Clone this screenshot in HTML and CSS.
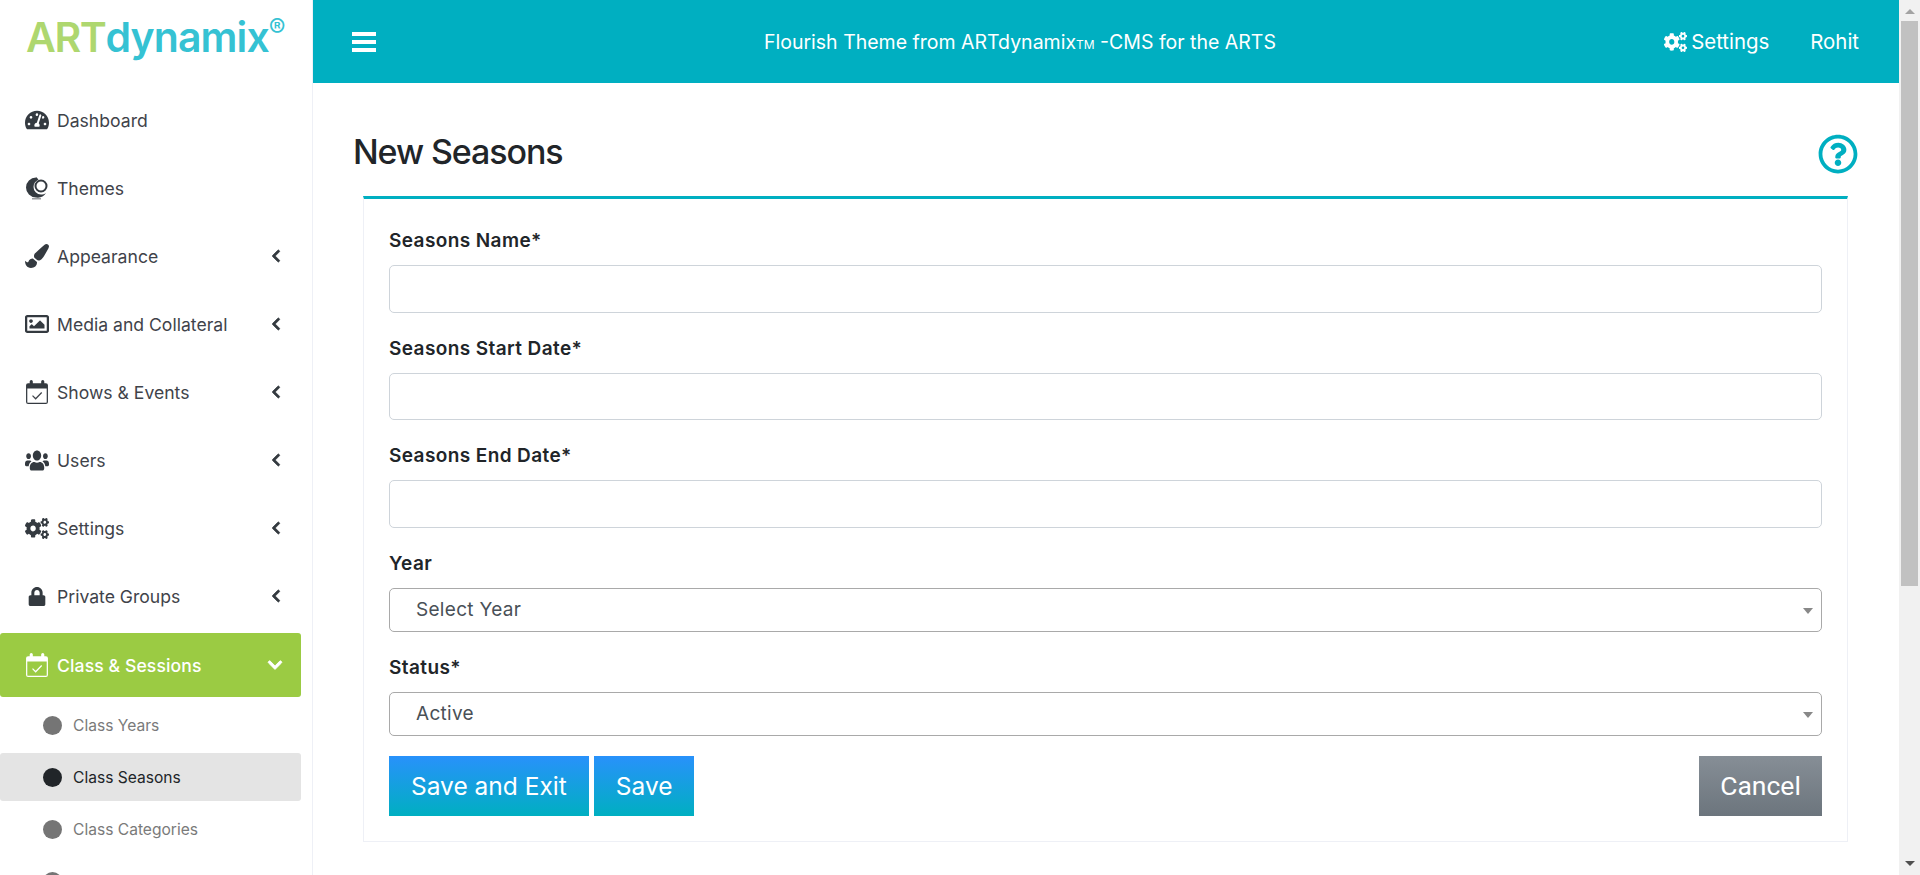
FILE: index.html
```html
<!DOCTYPE html>
<html lang="en">
<head>
  <meta charset="UTF-8">
  <meta name="viewport" content="width=device-width, initial-scale=1.0">
  <title>New Seasons</title>
  <link rel="stylesheet" href="styles.css">
</head>
<body>
  <svg class="icon-defs" width="0" height="0">
    <symbol id="i-dash" viewBox="0 0 576 512"><path d="M288 32C128.94 32 0 160.94 0 320c0 52.8 14.25 102.26 39.06 144.8 5.61 9.62 16.3 15.2 27.44 15.2h443c11.14 0 21.83-5.58 27.44-15.2C561.75 422.26 576 372.8 576 320c0-159.06-128.94-288-288-288zm0 64c14.71 0 26.58 10.13 30.32 23.65-1.11 2.26-2.64 4.23-3.45 6.67l-9.22 27.67c-5.13 3.49-10.97 6.01-17.64 6.01-17.67 0-32-14.33-32-32S270.33 96 288 96zM96 384c-17.67 0-32-14.33-32-32s14.33-32 32-32 32 14.33 32 32-14.33 32-32 32zm48-160c-17.67 0-32-14.33-32-32s14.33-32 32-32 32 14.33 32 32-14.33 32-32 32zm246.77-72.41l-61.33 184C343.13 347.33 352 364.54 352 384c0 11.72-3.38 22.55-8.88 32H232.88c-5.5-9.45-8.88-20.28-8.88-32 0-33.94 26.5-61.43 59.9-63.59l61.34-184.01c4.17-12.56 17.73-19.45 30.36-15.17 12.57 4.19 19.35 17.79 15.17 30.36zm14.66 57.2l15.52-46.55c3.47-1.29 7.13-2.23 11.05-2.23 17.67 0 32 14.33 32 32s-14.33 32-32 32c-11.38-.01-20.89-6.28-26.57-15.22zM480 384c-17.67 0-32-14.33-32-32s14.33-32 32-32 32 14.33 32 32-14.33 32-32 32z"/></symbol>
    <symbol id="i-themes" viewBox="0 0 24 24"><path fill-rule="evenodd" d="M11 1.500a10 10 0 1 0 0 20 10 10 0 0 0 10-4.500c-1.500 1-3 1.500-5 1.500a7.500 7.500 0 0 1-7.500-7.500c0-3.500 2-6 5-7.200a10 10 0 0 0-2.500-2.800z"/><path fill-rule="evenodd" d="M16 3.500a6.500 6.500 0 1 0 0 13 6.500 6.500 0 1 0 0-13zm0 2a4.500 4.500 0 1 1 0 9 4.500 4.500 0 1 1 0-9z"/><rect x="7" y="22" width="9" height="1.500" opacity=".5"/></symbol>
    <symbol id="i-brush" viewBox="0 0 512 512"><path d="M167.02 309.34c-40.12 2.58-76.53 17.86-97.19 72.3-2.35 6.21-8 9.98-14.59 9.98-11.11 0-45.46-27.67-55.25-34.35C0 439.62 37.93 512 128 512c75.86 0 128-43.77 128-120.19 0-3.11-.65-6.08-.97-9.13l-88.01-73.34zM457.89 0c-15.16 0-29.37 6.71-40.21 16.45C213.27 199.05 192 203.34 192 257.09c0 13.7 3.25 26.76 8.73 38.7l63.82 53.18c7.21 1.8 14.64 3.03 22.39 3.03 62.11 0 98.11-45.47 211.16-256.46 7.38-14.35 13.9-29.85 13.9-45.99C512 20.64 486 0 457.89 0z"/></symbol>
    <symbol id="i-image" viewBox="0 0 512 512"><path d="M464 64H48C21.49 64 0 85.49 0 112v288c0 26.51 21.49 48 48 48h416c26.51 0 48-21.49 48-48V112c0-26.51-21.49-48-48-48zm-6 336H54a6 6 0 0 1-6-6V118a6 6 0 0 1 6-6h404a6 6 0 0 1 6 6v276a6 6 0 0 1-6 6zM128 152c-22.091 0-40 17.909-40 40s17.909 40 40 40 40-17.909 40-40-17.909-40-40-40zM96 352h320v-80l-87.515-87.515c-4.686-4.686-12.284-4.686-16.971 0L192 304l-39.515-39.515c-4.686-4.686-12.284-4.686-16.971 0L96 304v48z"/></symbol>
    <symbol id="i-cal" viewBox="0 0 21 23"><path d="M5 0a1.500 1.500 0 0 1 1.500 1.500V3h8V1.500a1.500 1.500 0 0 1 3 0V3H19a2 2 0 0 1 2 2v16a2 2 0 0 1-2 2H2a2 2 0 0 1-2-2V5a2 2 0 0 1 2-2h1.500V1.500A1.500 1.500 0 0 1 5 0zM1.200 8.200V21a.8.8 0 0 0 .8.8h17a.8.8 0 0 0 .8-.8V8.200z"/><path d="M6.200 15l3 3 5.800-6" fill="none" stroke="currentColor" stroke-width="1.200"/></symbol>
    <symbol id="i-users" viewBox="0 0 640 512" preserveAspectRatio="none"><path d="M96 224c35.300 0 64-28.700 64-64s-28.700-64-64-64-64 28.700-64 64 28.700 64 64 64zm448 0c35.300 0 64-28.700 64-64s-28.700-64-64-64-64 28.700-64 64 28.700 64 64 64zm32 32h-64c-17.600 0-33.500 7.100-45.100 18.600 40.300 22.100 68.900 62 75.100 109.400h66c17.700 0 32-14.300 32-32v-32c0-35.300-28.700-64-64-64zm-256 0c61.900 0 112-50.100 112-112S381.900 32 320 32 208 82.100 208 144s50.100 112 112 112zm76.800 32h-8.300c-20.800 10-43.900 16-68.500 16s-47.600-6-68.500-16h-8.300C179.600 288 128 339.600 128 403.200V432c0 26.500 21.500 48 48 48h288c26.500 0 48-21.500 48-48v-28.800c0-63.600-51.600-115.200-115.200-115.200zm-223.700-13.400C161.500 263.100 145.600 256 128 256H64c-35.300 0-64 28.700-64 64v32c0 17.700 14.300 32 32 32h65.900c6.300-47.400 34.900-87.300 75.200-109.400z"/></symbol>
    <symbol id="i-cogs" viewBox="0 0 640 512" preserveAspectRatio="none"><path d="M512.100 191l-8.200 14.300c-3 5.300-9.400 7.500-15.100 5.400-11.800-4.400-22.600-10.700-32.100-18.600-4.600-3.800-5.800-10.500-2.800-15.700l8.200-14.300c-6.900-8-12.300-17.300-15.900-27.400h-16.500c-6 0-11.200-4.300-12.200-10.300-2-12-2.100-24.600 0-37.100 1-6 6.200-10.400 12.200-10.400h16.500c3.600-10.100 9-19.400 15.900-27.400l-8.200-14.300c-3-5.200-1.900-11.900 2.800-15.700 9.500-7.900 20.400-14.200 32.100-18.600 5.700-2.100 12.100.1 15.100 5.400l8.200 14.300c10.500-1.900 21.200-1.900 31.700 0L552 6.300c3-5.300 9.400-7.500 15.100-5.400 11.800 4.400 22.600 10.700 32.100 18.600 4.600 3.800 5.800 10.500 2.800 15.700l-8.200 14.300c6.900 8 12.300 17.300 15.900 27.400h16.500c6 0 11.200 4.300 12.200 10.300 2 12 2.100 24.600 0 37.100-1 6-6.200 10.400-12.200 10.400h-16.500c-3.600 10.100-9 19.400-15.900 27.400l8.200 14.300c3 5.200 1.900 11.900-2.800 15.700-9.500 7.900-20.400 14.200-32.100 18.600-5.700 2.100-12.100-.1-15.100-5.400l-8.200-14.300c-10.400 1.900-21.200 1.900-31.700 0zm-10.500-58.800c38.500 29.600 82.400-14.300 52.800-52.800-38.500-29.700-82.400 14.300-52.800 52.800zM386.300 286.100l33.700 16.800c10.100 5.800 14.500 18.100 10.500 29.100-8.900 24.200-26.400 46.400-42.600 65.800-7.400 8.900-20.200 11.100-30.300 5.300l-29.100-16.800c-16 13.700-34.600 24.600-54.900 31.700v33.600c0 11.600-8.300 21.600-19.700 23.600-24.600 4.200-50.400 4.400-75.900 0-11.500-2-20-11.900-20-23.600V418c-20.300-7.200-38.900-18-54.900-31.700L74 403c-10 5.800-22.900 3.600-30.300-5.300-16.200-19.400-33.300-41.600-42.200-65.700-4-10.900.4-23.200 10.500-29.100l33.300-16.800c-3.900-20.900-3.900-42.400 0-63.400L12 205.800c-10.100-5.800-14.600-18.100-10.500-29 8.900-24.200 26-46.400 42.200-65.800 7.400-8.900 20.200-11.100 30.300-5.300l29.100 16.800c16-13.700 34.600-24.600 54.900-31.700V57.100c0-11.500 8.200-21.500 19.600-23.500 24.600-4.200 50.500-4.400 76-.1 11.500 2 20 11.900 20 23.600v33.600c20.300 7.200 38.900 18 54.900 31.700l29.100-16.800c10-5.800 22.900-3.600 30.300 5.300 16.200 19.400 33.200 41.600 42.100 65.800 4 10.900.1 23.200-10 29.100l-33.700 16.800c3.900 21 3.900 42.500 0 63.500zm-117.600 21.100c59.200-77-28.700-164.900-105.700-105.700-59.200 77 28.700 164.900 105.700 105.700zm243.400 182.700l-8.200 14.300c-3 5.300-9.400 7.500-15.100 5.400-11.800-4.400-22.600-10.700-32.100-18.600-4.600-3.800-5.800-10.500-2.800-15.700l8.200-14.300c-6.900-8-12.300-17.300-15.900-27.400h-16.500c-6 0-11.200-4.300-12.200-10.300-2-12-2.100-24.600 0-37.100 1-6 6.200-10.400 12.200-10.400h16.500c3.600-10.100 9-19.400 15.900-27.400l-8.200-14.300c-3-5.200-1.900-11.900 2.800-15.700 9.500-7.900 20.400-14.200 32.100-18.600 5.700-2.100 12.100.1 15.100 5.400l8.200 14.300c10.500-1.900 21.200-1.900 31.700 0l8.200-14.300c3-5.300 9.400-7.500 15.100-5.400 11.800 4.400 22.600 10.700 32.100 18.600 4.600 3.800 5.800 10.500 2.800 15.700l-8.200 14.300c6.900 8 12.300 17.300 15.900 27.400h16.500c6 0 11.200 4.300 12.200 10.300 2 12 2.100 24.600 0 37.100-1 6-6.200 10.400-12.200 10.400h-16.500c-3.600 10.100-9 19.400-15.900 27.400l8.200 14.300c3 5.200 1.900 11.900-2.800 15.700-9.500 7.900-20.400 14.200-32.100 18.600-5.700 2.100-12.100-.1-15.100-5.400l-8.200-14.300c-10.400 1.900-21.200 1.900-31.700 0zM501.600 431c38.500 29.600 82.400-14.300 52.800-52.800-38.500-29.600-82.400 14.300-52.800 52.800z"/></symbol>
    <symbol id="i-lock" viewBox="0 0 448 512"><path d="M400 224h-24v-72C376 68.200 307.800 0 224 0S72 68.200 72 152v72H48c-26.500 0-48 21.500-48 48v192c0 26.500 21.500 48 48 48h352c26.500 0 48-21.500 48-48V272c0-26.500-21.500-48-48-48zm-104 0H152v-72c0-39.700 32.300-72 72-72s72 32.300 72 72v72z"/></symbol>
    <symbol id="i-left" viewBox="0 0 320 512"><path d="M34.520 239.030L228.870 44.690c9.370-9.370 24.570-9.370 33.940 0l22.670 22.670c9.360 9.360 9.370 24.520.04 33.900L131.490 256l154.020 154.750c9.340 9.380 9.320 24.540-.04 33.900l-22.670 22.670c-9.370 9.370-24.570 9.370-33.940 0L34.520 272.970c-9.370-9.370-9.370-24.570 0-33.940z"/></symbol>
    <symbol id="i-down" viewBox="0 0 448 512"><path d="M207.029 381.476L12.686 187.132c-9.373-9.373-9.373-24.569 0-33.941l22.667-22.667c9.357-9.357 24.522-9.375 33.901-.04L224 284.505l154.745-154.021c9.379-9.335 24.544-9.317 33.901.04l22.667 22.667c9.373 9.373 9.373 24.569 0 33.941L240.971 381.476c-9.373 9.372-24.569 9.372-33.942 0z"/></symbol>
    <symbol id="i-help" viewBox="0 0 512 512"><path d="M256 8C119.043 8 8 119.083 8 256c0 136.997 111.043 248 248 248s248-111.003 248-248C504 119.083 392.957 8 256 8zm0 448c-110.532 0-200-89.431-200-200 0-110.495 89.472-200 200-200 110.491 0 200 89.471 200 200 0 110.530-89.431 200-200 200zm107.244-255.200c0 67.052-72.421 68.084-72.421 92.863V300c0 6.627-5.373 12-12 12h-45.647c-6.627 0-12-5.373-12-12v-8.659c0-35.745 27.100-50.034 47.579-61.516 17.561-9.845 28.324-16.541 28.324-29.579 0-17.246-21.999-28.693-39.784-28.693-23.189 0-33.894 10.977-48.942 29.969-4.057 5.120-11.460 6.071-16.666 2.124l-27.824-21.098c-5.107-3.872-6.251-11.066-2.644-16.363C184.846 131.491 214.940 112 261.794 112c49.071 0 101.450 38.304 101.450 88.800zM298 368c0 23.159-18.841 42-42 42s-42-18.841-42-42 18.841-42 42-42 42 18.841 42 42z"/></symbol>
  </svg>

  <div class="app">
    <aside class="sidebar">
      <div class="logo"><span class="logo-art">ART</span><span class="logo-dyn">dynamix</span><sup class="logo-reg">®</sup></div>
      <nav class="menu">
        <a class="menu-item"><svg class="menu-icon"><use href="#i-dash"/></svg>Dashboard</a>
        <a class="menu-item"><svg class="menu-icon"><use href="#i-themes"/></svg>Themes</a>
        <a class="menu-item"><svg class="menu-icon"><use href="#i-brush"/></svg>Appearance<svg class="chev"><use href="#i-left"/></svg></a>
        <a class="menu-item"><svg class="menu-icon"><use href="#i-image"/></svg>Media and Collateral<svg class="chev"><use href="#i-left"/></svg></a>
        <a class="menu-item"><svg class="menu-icon"><use href="#i-cal"/></svg>Shows &amp; Events<svg class="chev"><use href="#i-left"/></svg></a>
        <a class="menu-item"><svg class="menu-icon users"><use href="#i-users"/></svg>Users<svg class="chev"><use href="#i-left"/></svg></a>
        <a class="menu-item"><svg class="menu-icon cogs"><use href="#i-cogs"/></svg>Settings<svg class="chev"><use href="#i-left"/></svg></a>
        <a class="menu-item"><svg class="menu-icon lock"><use href="#i-lock"/></svg>Private Groups<svg class="chev"><use href="#i-left"/></svg></a>
        <a class="menu-item active"><svg class="menu-icon"><use href="#i-cal"/></svg>Class &amp; Sessions<svg class="chev-down"><use href="#i-down"/></svg></a>
        <div class="submenu">
          <a class="sub-item"><span class="dot"></span>Class Years</a>
          <a class="sub-item current"><span class="dot"></span>Class Seasons</a>
          <a class="sub-item"><span class="dot"></span>Class Categories</a>
          <a class="sub-item"><span class="dot"></span>Class Terms</a>
        </div>
      </nav>
    </aside>

    <div class="main">
      <header class="topbar">
        <svg class="burger" viewBox="0 0 24 20"><rect width="24" height="4" y="0"/><rect width="24" height="4" y="8"/><rect width="24" height="4" y="16"/></svg>
        <div class="topbar-title">Flourish Theme from ARTdynamix<small>TM</small> -CMS for the ARTS</div>
        <div class="topbar-right">
          <a class="top-link"><svg class="top-cogs"><use href="#i-cogs"/></svg>Settings</a>
          <a class="top-link">Rohit</a>
        </div>
      </header>

      <div class="content">
        <div class="title-row">
          <h1>New Seasons</h1>
          <svg class="help"><use href="#i-help"/></svg>
        </div>
        <form class="card">
          <div class="field">
            <label for="name">Seasons Name*</label>
            <input id="name" type="text">
          </div>
          <div class="field">
            <label for="start">Seasons Start Date*</label>
            <input id="start" type="text">
          </div>
          <div class="field">
            <label for="end">Seasons End Date*</label>
            <input id="end" type="text">
          </div>
          <div class="field">
            <label for="year">Year</label>
            <div class="select-wrap">
              <select id="year"><option>Select Year</option></select>
            </div>
          </div>
          <div class="field">
            <label for="status">Status*</label>
            <div class="select-wrap">
              <select id="status"><option>Active</option></select>
            </div>
          </div>
          <div class="actions">
            <button type="button" class="btn btn-primary">Save and Exit</button>
            <button type="button" class="btn btn-primary">Save</button>
            <button type="button" class="btn btn-cancel">Cancel</button>
          </div>
        </form>
      </div>
    </div>

    <div class="scrollbar">
      <span class="arrow-up"></span>
      <div class="thumb"></div>
      <span class="arrow-down"></span>
    </div>
  </div>
</body>
</html>
```

FILE: styles.css
```css
* {
  box-sizing: border-box;
}
html, body {
  margin: 0;
  height: 100%;
  overflow: hidden;
}
body {
  font-family: Inter, "Liberation Sans", sans-serif;
  color: #212529;
  background-color: #fff;
}
.icon-defs {
  position: absolute;
}
.app {
  display: flex;
  height: 875px;
}

/* sidebar */
.sidebar {
  width: 313px;
  flex-shrink: 0;
  border-right: 1px solid #eef0f6;
  overflow: hidden;
}
.logo {
  height: 83px;
  padding: 12px 0 0 26px;
  font-size: 41px;
  font-weight: 600;
  line-height: 50px;
  white-space: nowrap;
}
.logo-art {
  color: #aed76f;
  letter-spacing: -1.4px;
}
.logo-dyn {
  color: #35c2d3;
  letter-spacing: -0.9px;
}
.logo-reg {
  font-size: 25px;
  font-weight: 400;
  color: #35c2d3;
  line-height: 0;
  vertical-align: 15px;
}
.menu {
  padding: 6px 11px 0 0;
}
.menu-item {
  display: flex;
  align-items: center;
  height: 64px;
  margin-bottom: 4px;
  padding: 0 0 2px 25px;
  font-size: 17.6px;
  color: #3f434a;
  fill: #343a40;
  border-radius: 3px;
}
.menu-icon {
  width: 24px;
  height: 24px;
  margin-right: 8px;
  flex-shrink: 0;
}
.menu-icon.lock {
  height: 19px;
}
.menu-icon.users {
  height: 23px;
}
.menu-icon.cogs {
  height: 21px;
}
.chev {
  width: 12px;
  height: 14px;
  margin-left: auto;
  margin-right: 19px;
  fill: #343a40;
  stroke: #343a40;
  stroke-width: 30px;
}
.chev-down {
  width: 16px;
  height: 16px;
  margin-left: auto;
  margin-right: 18px;
  fill: #fff;
  stroke: #fff;
  stroke-width: 30px;
}
.menu-item.active {
  padding-bottom: 0;
  font-weight: 500;
  letter-spacing: 0.1px;
  background-color: #9bcb43;
  color: #fff;
  fill: #fff;
}
.sub-item {
  display: flex;
  align-items: center;
  height: 48px;
  margin-bottom: 4px;
  padding-left: 43px;
  font-size: 15.6px;
  color: #7a7a7a;
  border-radius: 3px;
}
.dot {
  width: 19px;
  height: 19px;
  margin-right: 11px;
  border-radius: 50%;
  background-color: #757575;
}
.sub-item.current {
  background-color: #e4e4e4;
  color: #212529;
}
.sub-item.current .dot {
  background-color: #212529;
}

/* top bar */
.main {
  width: 1586px;
  flex-shrink: 0;
}
.topbar {
  display: flex;
  align-items: center;
  height: 83px;
  padding: 0 40px 0 39px;
  background-color: #00afc1;
  color: #fff;
  fill: #fff;
  font-size: 19.5px;
}
.burger {
  width: 24px;
  height: 20px;
  flex-shrink: 0;
}
.topbar-title {
  margin-left: 388px;
  white-space: nowrap;
}
.topbar-title small {
  font-size: 12px;
}
.topbar-right {
  display: flex;
  gap: 41px;
  margin-left: auto;
  font-size: 20.4px;
}
.top-link {
  display: flex;
  align-items: center;
}
.top-cogs {
  width: 23px;
  height: 20px;
  margin-right: 4px;
}

/* content */
.content {
  padding: 47px 42px 0 41px;
}
.title-row {
  display: flex;
  justify-content: space-between;
  align-items: center;
  height: 42px;
  margin-bottom: 24px;
}
h1 {
  margin: 2px 0 0 -1px;
  font-size: 34px;
  font-weight: 500;
  line-height: 42px;
  letter-spacing: -1.1px;
}
.help {
  width: 40px;
  height: 40px;
  margin: 5px -1px 0 0;
  fill: #00afc1;
}
.card {
  margin: 0 9px;
  padding: 29px 25px 25px;
  border: 1px solid #eef0f6;
  border-top: 3px solid #00afc1;
}
.field {
  margin-bottom: 23px;
}
label {
  display: block;
  height: 24px;
  margin-bottom: 13px;
  font-size: 19px;
  font-weight: 600;
  line-height: 26px;
  letter-spacing: 0.4px;
}
input {
  display: block;
  width: 100%;
  height: 47.5px;
  border: 1px solid #ced4da;
  border-radius: 5px;
  background-color: #fff;
}
.select-wrap {
  position: relative;
}
.select-wrap::after {
  content: "";
  position: absolute;
  top: 20px;
  right: 9px;
  border-left: 5px solid transparent;
  border-right: 5px solid transparent;
  border-top: 6px solid #888;
}
select {
  display: block;
  width: 100%;
  height: 44px;
  padding-left: 26px;
  border: 1px solid #a9a9a9;
  border-radius: 5px;
  background-color: #fff;
  font-family: Inter, "Liberation Sans", sans-serif;
  font-size: 19px;
  letter-spacing: 0.3px;
  color: #495057;
  appearance: none;
}
.actions {
  display: flex;
  gap: 5px;
  margin-top: -3px;
}
.btn {
  height: 60px;
  padding: 0 22px;
  border: none;
  color: #fff;
  font-family: Inter, "Liberation Sans", sans-serif;
  font-size: 24.5px;
}
.btn-primary {
  background: linear-gradient(#2891fb, #00afc1);
}
.btn-cancel {
  margin-left: auto;
  width: 123px;
  padding: 0;
  font-family: Roboto, "Liberation Sans", sans-serif;
  font-size: 26.5px;
  background: linear-gradient(#868e96, #6c757d);
}

/* scrollbar drawn by hand, the page itself does not scroll */
.scrollbar {
  display: flex;
  flex-direction: column;
  align-items: center;
  width: 21px;
  flex-shrink: 0;
  background-color: #f1f1f1;
}
.arrow-up {
  margin: 9px 0 7px;
  border-left: 5px solid transparent;
  border-right: 5px solid transparent;
  border-bottom: 5px solid #a3a3a3;
}
.thumb {
  width: 17px;
  height: 565px;
  background-color: #c1c1c1;
}
.arrow-down {
  margin-top: auto;
  margin-bottom: 9px;
  border-left: 5px solid transparent;
  border-right: 5px solid transparent;
  border-top: 5px solid #505050;
}
```
